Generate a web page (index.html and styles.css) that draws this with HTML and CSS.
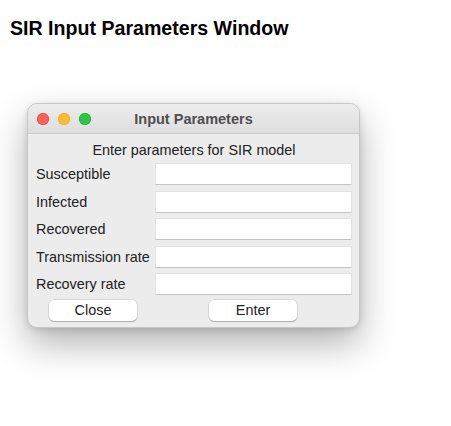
FILE: index.html
```html
<!DOCTYPE html>
<html>
<head>
<meta charset="utf-8">
<link rel="stylesheet" href="styles.css">
</head>
<body>
<h1 class="page-title">SIR Input Parameters Window</h1>
<div class="window">
  <div class="titlebar">
    <div class="lights">
      <span class="light red"></span>
      <span class="light yellow"></span>
      <span class="light green"></span>
    </div>
    <div class="title">Input Parameters</div>
    <div></div>
  </div>
  <div class="content">
    <div class="subtitle">Enter parameters for SIR model</div>
    <div class="form">
      <label class="label">Susceptible</label><div class="field"></div>
      <label class="label">Infected</label><div class="field"></div>
      <label class="label">Recovered</label><div class="field"></div>
      <label class="label">Transmission rate</label><div class="field"></div>
      <label class="label">Recovery rate</label><div class="field"></div>
    </div>
    <div class="buttons">
      <div class="btn">Close</div>
      <div class="btn">Enter</div>
    </div>
  </div>
</div>
</body>
</html>
```
FILE: styles.css
```css
html, body {
  margin: 0;
  padding: 0;
  background: #ffffff;
}
body {
  font-family: "Liberation Sans", Arial, sans-serif;
  width: 451px;
  height: 426px;
  overflow: hidden;
}
.page-title {
  margin: 0;
  padding: 17px 0 0 10px;
  font-size: 19.6px;
  line-height: 23px;
  font-weight: bold;
  color: #000;
}
.window {
  margin: 63px 0 0 27px;
  width: 333px;
  box-sizing: border-box;
  background: #ececec;
  border: 1px solid #c6c6c6;
  border-radius: 10px;
  box-shadow: 0 16px 36px rgba(0,0,0,0.3), 0 2px 6px rgba(0,0,0,0.12);
  overflow: hidden;
}
.titlebar {
  height: 29px;
  display: grid;
  grid-template-columns: 1fr auto 1fr;
  align-items: center;
  background: linear-gradient(#ededed, #dedede);
  border-bottom: 1px solid #cbcbcb;
}
.lights {
  display: flex;
  gap: 9px;
  padding-left: 9px;
}
.light {
  width: 12px;
  height: 12px;
  border-radius: 50%;
  display: block;
}
.red { background: #fe5f57; box-shadow: inset 0 0 0 0.5px #e0443e; }
.yellow { background: #febc2e; box-shadow: inset 0 0 0 0.5px #dea123; }
.green { background: #28c840; box-shadow: inset 0 0 0 0.5px #1aab29; }
.title {
  font-size: 14.5px;
  font-weight: bold;
  color: #4f4f4f;
}
.content {
  padding: 8px 7px 6px 8px;
}
.subtitle {
  text-align: center;
  font-size: 14.4px;
  line-height: 16px;
  color: #222;
  margin-bottom: 5px;
}
.form {
  display: grid;
  grid-template-columns: 119px 197px;
  grid-auto-rows: 22px;
  row-gap: 5.5px;
  align-items: center;
}
.label {
  font-size: 14.4px;
  line-height: 24px;
  color: #222;
  white-space: nowrap;
}
.field {
  height: 22px;
  box-sizing: border-box;
  background: #fff;
  border: 1px solid #e2e2e2;
  border-bottom: 1px solid #c4c4c4;
}
.buttons {
  display: flex;
  gap: 72px;
  padding-left: 13px;
  margin-top: 5px;
}
.btn {
  width: 88px;
  height: 21px;
  box-sizing: border-box;
  background: #fff;
  border-radius: 5px;
  box-shadow: 0 0 0 0.5px rgba(0,0,0,0.15), 0 1px 1px rgba(0,0,0,0.2);
  font-size: 14.4px;
  line-height: 21px;
  text-align: center;
  color: #222;
}
```
